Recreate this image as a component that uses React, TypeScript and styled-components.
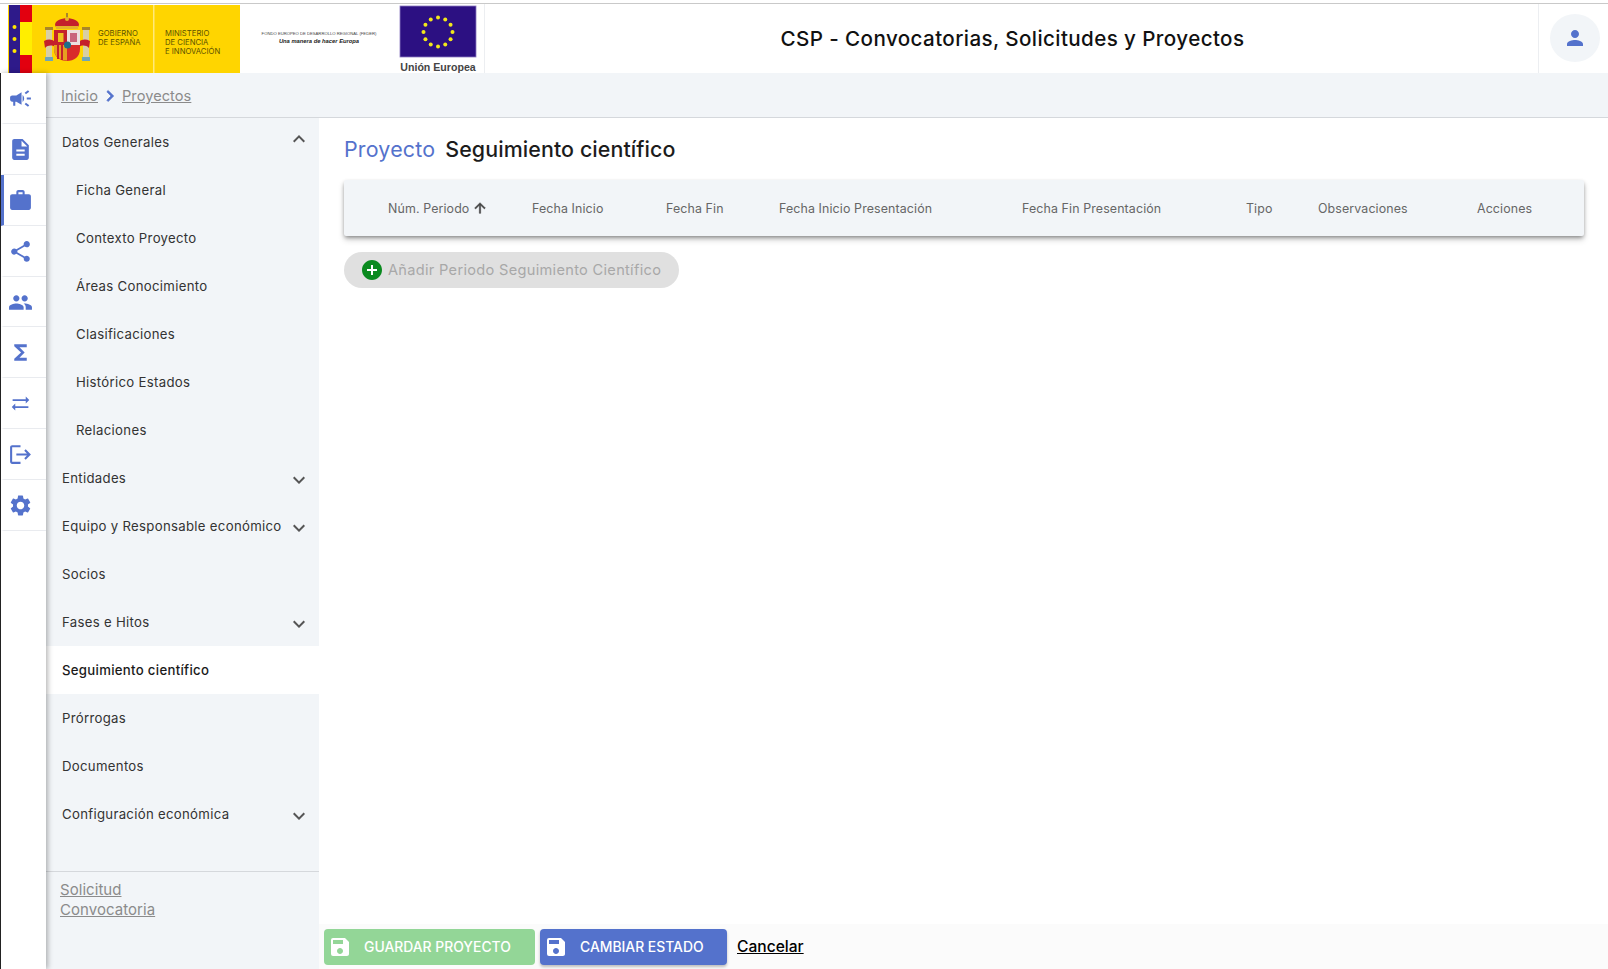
import React from "react";
import styled, { createGlobalStyle } from "styled-components";
import {
  MdCampaign, MdDescription, MdWork, MdShare, MdPeople, MdFunctions, MdSyncAlt, MdLogout, MdSettings,
  MdPerson, MdSave, MdAddCircle, MdArrowUpward, MdExpandMore, MdExpandLess, MdChevronRight,
} from "react-icons/md";

const FONT = `Inter, "Open Sans", "Liberation Sans", sans-serif`;
const BLUE = "#5472cc";

const Global = createGlobalStyle`
  html, body { margin: 0; padding: 0; background: #fff; overflow: hidden; }
  * { box-sizing: border-box; }
  body { font-family: ${FONT}; }
`;

const Page = styled.div`
  width: 1608px; height: 969px; display: flex; flex-direction: column; overflow: hidden; padding-top: 3px;
`;
const Header = styled.header`
  height: 70px; flex: none; display: flex; align-items: stretch; border-top: 1px solid #c9c9c9; background: #fff;
`;
const Logos = styled.div`
  width: 485px; flex: none; display: flex; border-right: 1px solid #eceef1; padding-left: 8px; padding-top: 1px;
`;
const HeaderTitle = styled.h1`
  flex: 1; margin: 0; display: flex; align-items: center; justify-content: center;
  font: 500 20.6px ${FONT}; color: #111; letter-spacing: 0.4px; padding: 0 0 1px 2px;
`;
const UserZone = styled.div`
  width: 70px; flex: none; border-left: 1px solid #eceef1; display: flex; align-items: center;
  padding: 0 0 2px 11px;
`;
const Avatar = styled.div`
  width: 50px; height: 48px; border-radius: 50%; background: #f2f5f8; color: ${BLUE};
  display: flex; align-items: center; justify-content: center; font-size: 24px; padding-right: 1px;
`;
const Body = styled.div`
  flex: 1; display: flex; min-height: 0;
`;
const Rail = styled.nav`
  width: 46px; flex: none; background: #fff; border-left: 1px solid #222; display: flex; flex-direction: column;
  box-shadow: 2px 0 5px rgba(0,0,0,.28); position: relative; z-index: 2;
`;
const RailItem = styled.div<{ $active?: boolean; $size: number }>`
  height: 50.9px; flex: none; display: flex; align-items: center; justify-content: center; color: ${BLUE};
  font-size: ${p => p.$size}px; border-bottom: 1px solid #e9ebef; padding: 1px 9px 0 0;
  border-left: 3px solid ${p => (p.$active ? BLUE : "transparent")};
`;
const Main = styled.div`
  flex: 1; display: flex; flex-direction: column; min-width: 0;
`;
const Breadcrumb = styled.div`
  height: 45px; flex: none; background: #f2f5f8; border-bottom: 1px solid #d5d8dc; display: flex; align-items: center;
  padding: 2px 0 0 15px; font-size: 15px; color: #8a8a8a;
`;
const Crumb = styled.a`
  color: #8b8b8b; text-decoration: underline; font: 400 14.6px ${FONT}; letter-spacing: 0.05px;
`;
const CrumbSep = styled.span`
  color: ${BLUE}; font-size: 22px; display: flex; margin: 0 1px 0 1px;
  & path:not([fill="none"]) { stroke: currentColor; stroke-width: 0.8px; }
`;
const Columns = styled.div`
  flex: 1; display: flex; min-height: 0;
`;
const Side = styled.aside`
  width: 273px; flex: none; background: #f2f5f8; display: flex; flex-direction: column;
`;
const SideList = styled.div`
  height: 754px; flex: none; border-bottom: 1px solid #d5d8dc;
`;
const SideItem = styled.div<{ $sub?: boolean; $active?: boolean }>`
  height: 48px; display: flex; align-items: center; justify-content: space-between;
  padding-left: ${p => (p.$sub ? 30 : 16)}px; padding-right: 8px;
  background: ${p => (p.$active ? "#fff" : "transparent")};
  color: ${p => (p.$active ? "#1a1a1a" : "#333")};
  font: ${p => (p.$active ? 500 : 400)} 13.2px ${FONT}; letter-spacing: 0.3px;
`;
const Chevron = styled.span<{ $up?: boolean }>`
  display: flex; font-size: 24px; color: #555; margin-top: ${p => (p.$up ? -6 : 4)}px;
`;
const SideLinks = styled.div`
  padding: 8px 0 0 14px; display: flex; flex-direction: column; gap: 1px;
`;
const SideLink = styled.a`
  color: #8b8b8b; text-decoration: underline; font: 400 15px/19px ${FONT}; letter-spacing: 0.05px;
`;
const Content = styled.main`
  flex: 1; min-width: 0; display: flex; flex-direction: column;
`;
const Work = styled.div`
  flex: 1; padding: 16px 24px 0 25px; min-height: 0;
`;
const Title = styled.div`
  height: 30px; display: flex; align-items: center; gap: 10px; font: 400 21.4px ${FONT};
`;
const TitleKey = styled.span`
  color: ${BLUE}; letter-spacing: 0.2px;
`;
const TitleValue = styled.span`
  color: #1c1c1c; font-weight: 500; letter-spacing: 0.1px;
`;
const TableHead = styled.div`
  margin-top: 16px; height: 56px; background: #f2f5f8; border-radius: 2px;
  box-shadow: 0 2px 4px -1px rgba(0,0,0,.45), 0 4px 6px rgba(0,0,0,.16);
  display: grid; grid-template-columns: 144px 134px 113px 243px 224px 72px 159px 1fr;
  padding-left: 44px; align-items: center;
`;
const Th = styled.div`
  font: 400 12.4px ${FONT}; color: #666; letter-spacing: 0.12px; display: flex; align-items: center; gap: 3px;
`;
const SortIcon = styled.span`
  display: flex; font-size: 16px; color: #444;
  & path:not([fill="none"]) { stroke: currentColor; stroke-width: 0.8px; }
`;
const AddButton = styled.button`
  margin-top: 16px; height: 36px; width: 335px; border: 0; border-radius: 18px; background: #e0e0e0; color: #a8a8a8;
  display: flex; align-items: center; padding: 0 0 0 16px; gap: 4px; font: 400 14.6px ${FONT}; letter-spacing: 0.3px;
`;
const AddIcon = styled.span`
  display: flex; font-size: 24px; color: #0a8a1f; position: relative;
  &::before { content: ""; position: absolute; inset: 6px; background: #fff; z-index: 0; }
  & > svg { position: relative; z-index: 1; }
`;
const Footer = styled.footer`
  height: 45px; flex: none; background: #fbfbfb; display: flex; align-items: flex-start; padding: 5px 0 0 5px; gap: 5px;
`;
const ActionButton = styled.button<{ $variant: "green" | "blue"; $w: number }>`
  width: ${p => p.$w}px; height: 36px; border: 0; border-radius: 4px; color: #fff; display: flex; align-items: center;
  background: ${p => (p.$variant === "green" ? "#93d697" : BLUE)};
  box-shadow: ${p => (p.$variant === "blue" ? "0 2px 3px rgba(0,0,0,.25)" : "none")};
  padding: 0 0 0 4px; gap: 12px; font: 500 13.9px ${FONT}; letter-spacing: 0;
`;
const SaveIcon = styled.span`
  display: flex; font-size: 24px;
`;
const Cancel = styled.a`
  color: #000; text-decoration: underline; font: 500 15.6px ${FONT}; margin: 8px 0 0 5px;
`;

const LogoSpain = () => (
  <svg width="232" height="68" viewBox="0 0 232 68" style={{ flex: "none" }}>
    <rect width="232" height="68" fill="#ffd500" />
    <rect x="1" width="11" height="68" fill="#2e1a8a" />
    <rect x="12" width="12" height="68" fill="#e2000f" />
    <rect x="12" y="17" width="12" height="33" fill="#ffee00" />
    {[22, 34, 46].map(y => <circle key={y} cx="6.5" cy={y} r="2" fill="#ffe600" />)}
    <rect x="145" width="1.5" height="68" fill="#ffe97a" />
    {/* columnas */}
    <rect x="38" y="23" width="6" height="32" fill="#d8cfa4" />
    <rect x="75" y="23" width="6" height="32" fill="#d8cfa4" />
    <rect x="37" y="22" width="8" height="3" fill="#a8862a" />
    <rect x="74" y="22" width="8" height="3" fill="#a8862a" />
    <rect x="37" y="52" width="8" height="4" fill="#6fa6b8" />
    <rect x="74" y="52" width="8" height="4" fill="#6fa6b8" />
    {/* cintas */}
    <path d="M36 36c4-2 8-2 11 1v5c-3-2-7-2-10 1z" fill="#c4202b" />
    <path d="M82 36c-4-2-8-2-11 1v5c3-2 7-2 10 1z" fill="#c4202b" />
    {/* escudo */}
    <path d="M46 25h26v19c0 8-6 12-13 12s-13-4-13-12z" fill="#d92b2b" />
    <rect x="59" y="25" width="13" height="15" fill="#ecdfe0" />
    <rect x="46" y="25" width="13" height="15" fill="#c4212b" />
    <rect x="50" y="28" width="5.5" height="9" fill="#eec21f" />
    <rect x="62" y="28" width="7" height="9" fill="#c9657c" />
    <path d="M46 40h13v15.5c-7 0-13-4-13-11.5z" fill="#e6a020" />
    <rect x="49" y="40" width="2" height="14" fill="#c4212b" />
    <rect x="53" y="40" width="2" height="15" fill="#c4212b" />
    <circle cx="59.5" cy="40" r="3.5" fill="#1c6f8a" />
    {/* corona */}
    <path d="M47 20c0-9 24-9 24 0l-2 4H49z" fill="#c4202b" />
    <rect x="48" y="21" width="22" height="3" fill="#e5b32a" />
    <rect x="58" y="8" width="2" height="6" fill="#a8862a" />
    <circle cx="59" cy="14" r="2" fill="#e5b32a" />
    <g fontFamily="Inter, Liberation Sans, sans-serif" fontSize="7.7" fill="#5c5200" fontWeight="400">
      <text x="90" y="31">GOBIERNO</text>
      <text x="90" y="40">DE ESPAÑA</text>
      <text x="157" y="31">MINISTERIO</text>
      <text x="157" y="40">DE CIENCIA</text>
      <text x="157" y="48.5">E INNOVACIÓN</text>
    </g>
  </svg>
);

const LogoEu = () => {
  const stars = Array.from({ length: 12 }, (_, i) => {
    const a = (i * Math.PI) / 6;
    return <circle key={i} cx={38.5 + Math.sin(a) * 14.5} cy={26 - Math.cos(a) * 14.5} r="2" fill="#f2e81a" />;
  });
  return (
    <svg width="239" height="68" viewBox="0 0 239 68" style={{ flex: "none" }}>
      <g fontFamily="Liberation Sans, sans-serif" textAnchor="middle">
        <text x="79" y="30" fontSize="4.2" fill="#444">FONDO EUROPEO DE DESARROLLO REGIONAL (FEDER)</text>
        <text x="79" y="37.5" fontSize="5.8" fontStyle="italic" fontWeight="700" fill="#222">Una manera de hacer Europa</text>
      </g>
      <g transform="translate(160 0)">
        <rect x="0" y="1" width="76" height="51" fill="#2c1082" stroke="#8d7cc0" strokeWidth="0.8" />
        <g transform="translate(-0.5 1)">{stars}</g>
        <text x="38" y="66" textAnchor="middle" fontFamily="Liberation Sans, sans-serif" fontWeight="700" fontSize="10.6" fill="#444">Unión Europea</text>
      </g>
    </svg>
  );
};

const railIcons = [
  { I: MdCampaign, s: 25 }, { I: MdDescription, s: 25 }, { I: MdWork, s: 25 },
  { I: MdShare, s: 25 }, { I: MdPeople, s: 25 }, { I: MdFunctions, s: 25 },
  { I: MdSyncAlt, s: 21 }, { I: MdLogout, s: 25 }, { I: MdSettings, s: 25 },
];
type Item = { t: string; sub?: boolean; chev?: "up" | "down"; active?: boolean };
const items: Item[] = [
  { t: "Datos Generales", chev: "up" },
  { t: "Ficha General", sub: true },
  { t: "Contexto Proyecto", sub: true },
  { t: "Áreas Conocimiento", sub: true },
  { t: "Clasificaciones", sub: true },
  { t: "Histórico Estados", sub: true },
  { t: "Relaciones", sub: true },
  { t: "Entidades", chev: "down" },
  { t: "Equipo y Responsable económico", chev: "down" },
  { t: "Socios" },
  { t: "Fases e Hitos", chev: "down" },
  { t: "Seguimiento científico", active: true },
  { t: "Prórrogas" },
  { t: "Documentos" },
  { t: "Configuración económica", chev: "down" },
];
const columns = ["Fecha Inicio", "Fecha Fin", "Fecha Inicio Presentación", "Fecha Fin Presentación", "Tipo", "Observaciones", "Acciones"];

export default function App() {
  return (
    <Page>
      <Global />
      <Header>
        <Logos><LogoSpain /><LogoEu /></Logos>
        <HeaderTitle>CSP - Convocatorias, Solicitudes y Proyectos</HeaderTitle>
        <UserZone><Avatar><MdPerson /></Avatar></UserZone>
      </Header>
      <Body>
        <Rail>
          {railIcons.map(({ I, s }, i) => <RailItem key={i} $size={s} $active={i === 2}><I /></RailItem>)}
        </Rail>
        <Main>
          <Breadcrumb>
            <Crumb>Inicio</Crumb>
            <CrumbSep><MdChevronRight /></CrumbSep>
            <Crumb>Proyectos</Crumb>
          </Breadcrumb>
          <Columns>
            <Side>
              <SideList>
                {items.map(it => (
                  <SideItem key={it.t} $sub={it.sub} $active={it.active}>
                    <span>{it.t}</span>
                    {it.chev && <Chevron $up={it.chev === "up"}>{it.chev === "up" ? <MdExpandLess /> : <MdExpandMore />}</Chevron>}
                  </SideItem>
                ))}
              </SideList>
              <SideLinks>
                <SideLink>Solicitud</SideLink>
                <SideLink>Convocatoria</SideLink>
              </SideLinks>
            </Side>
            <Content>
              <Work>
                <Title><TitleKey>Proyecto</TitleKey><TitleValue>Seguimiento científico</TitleValue></Title>
                <TableHead>
                  <Th>Núm. Periodo <SortIcon><MdArrowUpward /></SortIcon></Th>
                  {columns.map(c => <Th key={c}>{c}</Th>)}
                </TableHead>
                <AddButton><AddIcon><MdAddCircle /></AddIcon>Añadir Periodo Seguimiento Científico</AddButton>
              </Work>
              <Footer>
                <ActionButton $variant="green" $w={211}><SaveIcon><MdSave /></SaveIcon>GUARDAR PROYECTO</ActionButton>
                <ActionButton $variant="blue" $w={187}><SaveIcon><MdSave /></SaveIcon>CAMBIAR ESTADO</ActionButton>
                <Cancel>Cancelar</Cancel>
              </Footer>
            </Content>
          </Columns>
        </Main>
      </Body>
    </Page>
  );
}
